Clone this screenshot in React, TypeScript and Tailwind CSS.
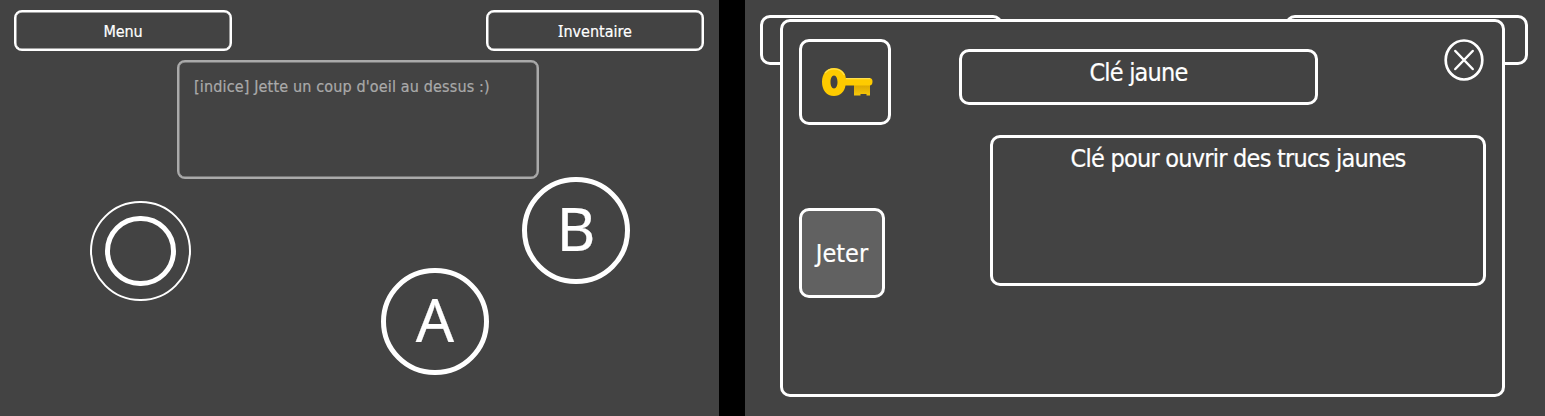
import React from "react";

function KeyIcon() {
  return (
    <svg width="52" height="30" viewBox="0 0 52 30" className="block">
      <defs>
        <linearGradient id="teeth" x1="0" y1="0" x2="0" y2="1">
          <stop offset="0" stopColor="#d9a400" />
          <stop offset="1" stopColor="#f7c80a" />
        </linearGradient>
      </defs>
      <path d="M33 17H49V28.5H45.500V27H39.500V28.5H33Z" fill="url(#teeth)" />
      <path
        fillRule="evenodd"
        d="M13 1C20 1 24.500 5.500 24.800 11H48.500Q51.500 11 51.500 14.500Q51.500 18.500 48.500 18.500H24.500C23.500 24.500 19.500 29 13 29C5.500 29 1 23 1 15S5.500 1 13 1ZM13 8.500C10.700 8.500 9.500 11.500 9.500 15S10.700 21.500 13 21.500S16.500 18.500 16.500 15S15.300 8.500 13 8.500Z"
        fill="#fecb00"
      />
      <path d="M4 6Q7.500 1.800 13 1.800Q20 1.800 23.200 8M25 11.700H49" fill="none" stroke="#ffe04d" strokeWidth="1.300" />
    </svg>
  );
}

function CloseIcon() {
  return (
    <svg width="40" height="42" viewBox="0 0 40 42" className="block" fill="none" stroke="#fff">
      <ellipse cx="20" cy="21" rx="18.300" ry="19.500" strokeWidth="2.700" />
      <path d="M11.300 12L28.700 30M28.700 12L11.300 30" strokeWidth="2.500" strokeLinecap="round" />
    </svg>
  );
}

function GamePad() {
  return (
    <section className="h-[416px] w-[719px] shrink-0 bg-[#434343] pt-[10px]">
      <header className="flex justify-between pr-[15px] pl-[14px] text-[16px]">
        <button className="h-[41px] w-[218px] rounded-[8px] border-2 border-white pt-[2px] tracking-[-0.15px] shadow-[inset_0_0_0_0.5px_#fff]">
          Menu
        </button>
        <button className="h-[41px] w-[218px] rounded-[8px] border-2 border-white pt-[2px] shadow-[inset_0_0_0_0.5px_#fff]">
          <span className="block leading-6 first-letter:font-['Noto_Sans']">Inventaire</span>
        </button>
      </header>
      <p className="mt-[9px] ml-[177px] h-[119px] w-[362px] rounded-[8px] border-2 border-[#aaa] px-[15px] pt-[13px] text-[16px] leading-6 tracking-[0.15px] text-[#aaa] shadow-[inset_0_0_0_0.5px_#aaa]">
        [indice] Jette un coup d'oeil au dessus :)
      </p>
      <div className="-mt-[2px] flex items-start font-['Noto_Sans',sans-serif] text-[60px] leading-none">
        <div className="mt-[24px] ml-[90px] flex h-[100px] w-[101px] items-center justify-center rounded-full border-2 border-white">
          <div className="h-[70px] w-[71px] rounded-full border-[5px] border-white" />
        </div>
        <button className="mt-[91px] ml-[190px] h-[107px] w-[108px] rounded-full border-[5px] border-white pb-[6px]">
          A
        </button>
        <button className="ml-[33px] h-[107px] w-[108px] rounded-full border-[5px] border-white pb-[6px]">
          B
        </button>
      </div>
    </section>
  );
}

function ItemDialog() {
  return (
    <div className="absolute top-[19px] left-[35px] h-[378px] w-[725px] rounded-[10px] border-[3px] border-white bg-[#434343] px-[16px] pt-[17px] text-[25px]">
      <div className="flex items-start">
        <div className="flex h-[86px] w-[92px] items-center justify-center rounded-[10px] border-[3px] border-white">
          <div className="pl-[4px]">
            <KeyIcon />
          </div>
        </div>
        <h2 className="mt-[10px] ml-[68px] h-[56px] w-[359px] rounded-[10px] border-[3px] border-white pt-[5px] text-center leading-[32px] tracking-[-0.8px]">
          Clé jaune
        </h2>
        <button className="ml-[126px]">
          <CloseIcon />
        </button>
      </div>
      <div className="mt-[10px] flex items-start">
        <button className="mt-[73px] h-[90px] w-[86px] rounded-[10px] border-[3px] border-white bg-[#616161] pt-px">
          Jeter
        </button>
        <p className="ml-[105px] h-[151px] w-[496px] rounded-[10px] border-[3px] border-white pt-[5px] text-center leading-[32px] tracking-[-0.77px]">
          Clé pour ouvrir des trucs jaunes
        </p>
      </div>
    </div>
  );
}

export default function App() {
  return (
    <main className="flex h-[416px] w-[1545px] gap-[26px] overflow-hidden bg-black font-['DejaVu_Sans_Condensed','DejaVu_Sans',sans-serif] [font-stretch:condensed] text-white [-webkit-text-stroke:0.2px]">
      <GamePad />
      <section className="relative h-[416px] w-[800px] shrink-0 bg-[#434343] pt-[15px]">
        <div className="flex justify-between pr-[17px] pl-[15px]">
          <div className="h-[50px] w-[243px] rounded-[10px] border-[3px] border-white" />
          <div className="h-[50px] w-[243px] rounded-[10px] border-[3px] border-white" />
        </div>
        <ItemDialog />
      </section>
    </main>
  );
}
